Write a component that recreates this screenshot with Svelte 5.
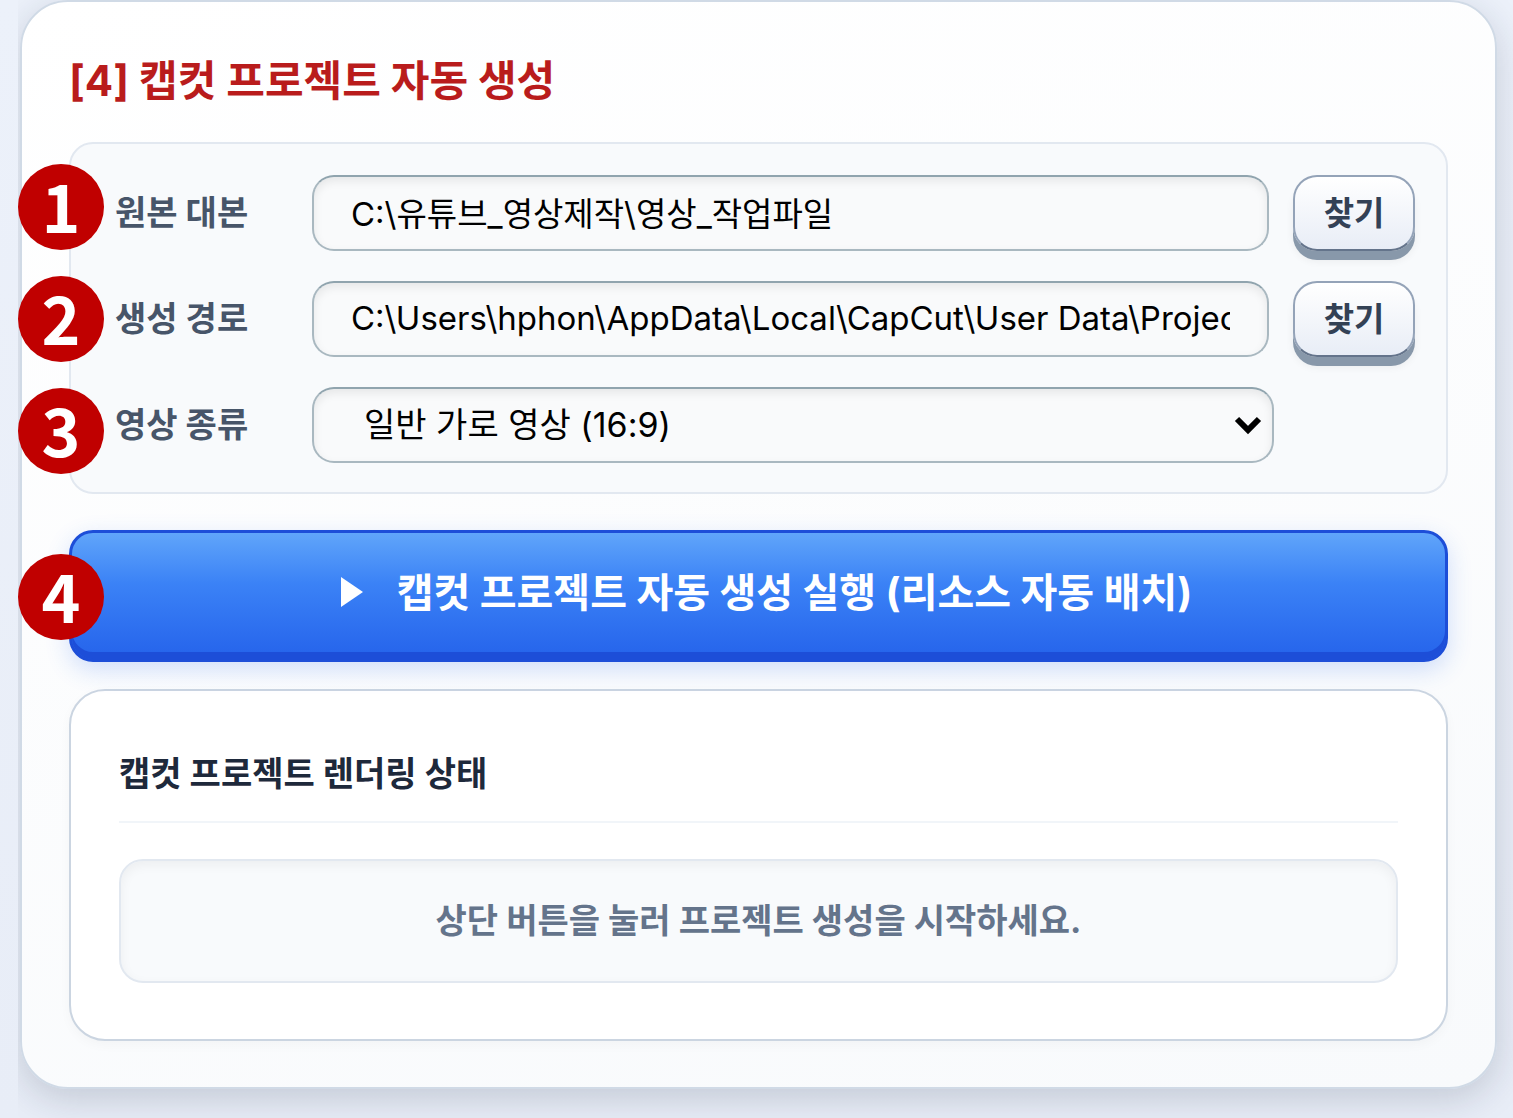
<script lang="ts">
  let sourcePath = $state('C:\\유튜브_영상제작\\영상_작업파일');
  let outputPath = $state('C:\\Users\\hphon\\AppData\\Local\\CapCut\\User Data\\Projects\\com.lveditor.draft');
  let videoType = $state('16:9');
</script>

<main>
  <section class="panel">
    <h1>[4] 캡컷 프로젝트 자동 생성</h1>

    <div class="settings">
      <ol class="steps">
        <li class="badge">1</li>
        <li class="badge">2</li>
        <li class="badge">3</li>
      </ol>

      <div class="row">
        <label for="source">원본 대본</label>
        <input id="source" type="text" bind:value={sourcePath} />
        <button type="button" class="browse">찾기</button>
      </div>
      <div class="row">
        <label for="output">생성 경로</label>
        <input id="output" type="text" bind:value={outputPath} />
        <button type="button" class="browse">찾기</button>
      </div>
      <div class="row">
        <label for="type">영상 종류</label>
        <div class="select">
          <select id="type" bind:value={videoType}>
            <option value="16:9">일반 가로 영상 (16:9)</option>
          </select>
          <svg viewBox="0 0 28 20" aria-hidden="true">
            <path d="M3 4 L14 15 L25 4" fill="none" stroke="#000" stroke-width="6" />
          </svg>
        </div>
      </div>
    </div>

    <div class="action">
      <span class="badge">4</span>
      <button type="button" class="run">
        <svg viewBox="0 0 22 30" aria-hidden="true">
          <path d="M0 0 L22 15 L0 30 Z" fill="#fff" />
        </svg>
        <span>캡컷 프로젝트 자동 생성 실행 (리소스 자동 배치)</span>
      </button>
    </div>

    <div class="status">
      <h2>캡컷 프로젝트 렌더링 상태</h2>
      <p>상단 버튼을 눌러 프로젝트 생성을 시작하세요.</p>
    </div>
  </section>
</main>

<style>
  :global(body) {
    background: linear-gradient(180deg, #ecf1fa 0%, #e8edf7 100%);
  }

  main {
    margin-left: 18px;
    padding: 0 16px 30px 2px;
    overflow: hidden;
    font-family: Inter, 'Noto Sans CJK KR', sans-serif;
  }

  .panel {
    box-sizing: border-box;
    padding: 48px 47px 46px;
    border: 2px solid #d0dae6;
    border-radius: 48px;
    background: linear-gradient(165deg, #ffffff 0%, #f8fafc 100%);
    box-shadow: 0 10px 36px rgba(30, 41, 59, 0.18);
  }

  h1 {
    margin: 0 0 30px;
    font-size: 42px;
    line-height: 62px;
    font-weight: 700;
    color: #b91c1c;
  }

  .settings {
    position: relative;
    display: flex;
    flex-direction: column;
    gap: 30px;
    padding: 31px 31px 29px 44px;
    border: 2px solid #e2e8f0;
    border-radius: 24px;
    background: #f8fafc;
  }

  .steps {
    position: absolute;
    top: 20px;
    left: -53px;
    display: flex;
    flex-direction: column;
    gap: 26px;
    margin: 0;
    padding: 0;
    list-style: none;
  }

  .badge {
    box-sizing: border-box;
    display: flex;
    align-items: center;
    justify-content: center;
    width: 86px;
    height: 86px;
    padding-bottom: 6px;
    border-radius: 50%;
    background: #c00000;
    color: #fff;
    font-family: 'Noto Sans CJK KR', sans-serif;
    font-size: 66px;
    line-height: 80px;
    font-weight: 700;
  }

  .row {
    display: flex;
    align-items: center;
    height: 76px;
  }

  label {
    flex: none;
    width: 197px;
    font-size: 34px;
    line-height: 50px;
    font-weight: 700;
    color: #475569;
  }

  input,
  select {
    box-sizing: border-box;
    height: 76px;
    margin: 0;
    border: 2px solid #a9b8c0;
    border-top-color: #90a4ae;
    border-radius: 22px;
    background: #f9fafb;
    box-shadow: inset 0 4px 10px rgba(0, 0, 0, 0.08);
    color: #000;
    font-family: inherit;
  }

  input {
    flex: 1;
    min-width: 0;
    padding: 0 37px 2px;
    font-size: 33px;
    line-height: 40px;
  }

  .select {
    position: relative;
    flex: 1;
    margin-right: 141px;
  }

  select {
    width: 100%;
    padding: 0 50px 2px;
    font-size: 34px;
    appearance: none;
  }

  .select svg {
    position: absolute;
    top: 28px;
    right: 12px;
    width: 28px;
    height: 20px;
    pointer-events: none;
  }

  .browse {
    flex: none;
    width: 122px;
    height: 76px;
    margin-left: 24px;
    padding: 0 0 4px;
    border: 2px solid #94a3b8;
    border-bottom-color: #64748b;
    border-radius: 24px;
    background: linear-gradient(180deg, #ffffff 0%, #e8edf6 100%);
    box-shadow: 0 9px 0 #8898aa, 0 10px 8px rgba(0, 0, 0, 0.06);
    color: #334155;
    font-family: inherit;
    font-size: 33px;
    font-weight: 700;
  }

  .action {
    position: relative;
    margin: 36px 0 27px;
  }

  .action .badge {
    position: absolute;
    top: 24px;
    left: -51px;
  }

  .run {
    display: flex;
    align-items: center;
    justify-content: center;
    gap: 34px;
    width: 100%;
    height: 132px;
    padding: 0 0 8px 16px;
    border: 3px solid #1d4ed8;
    border-radius: 24px;
    background: linear-gradient(180deg, #60a5fa 0%, #3b82f6 40%, #2563eb 100%);
    box-shadow:
      inset 0 -7px 0 #1d4ed8,
      0 8px 24px rgba(37, 99, 235, 0.2);
    color: #fff;
    font-family: inherit;
    font-size: 40px;
    font-weight: 700;
  }

  .run svg {
    width: 22px;
    height: 30px;
  }

  .run span {
    padding-bottom: 4px;
  }

  .status {
    padding: 58px 48px 56px;
    border: 2px solid #cbd5e1;
    border-radius: 36px;
    background: #fff;
    box-shadow: 0 4px 12px rgba(0, 0, 0, 0.03);
  }

  h2 {
    margin: 0 0 36px;
    padding-bottom: 22px;
    border-bottom: 2px solid #f1f5f9;
    font-size: 34px;
    line-height: 50px;
    font-weight: 700;
    color: #1e293b;
  }

  p {
    margin: 0;
    padding: 35px 20px;
    border: 2px solid #e2e8f0;
    border-radius: 24px;
    background: #f8fafc;
    box-shadow: inset 0 4px 12px rgba(0, 0, 0, 0.05);
    font-size: 34px;
    line-height: 50px;
    font-weight: 700;
    text-align: center;
    color: #64748b;
  }
</style>
